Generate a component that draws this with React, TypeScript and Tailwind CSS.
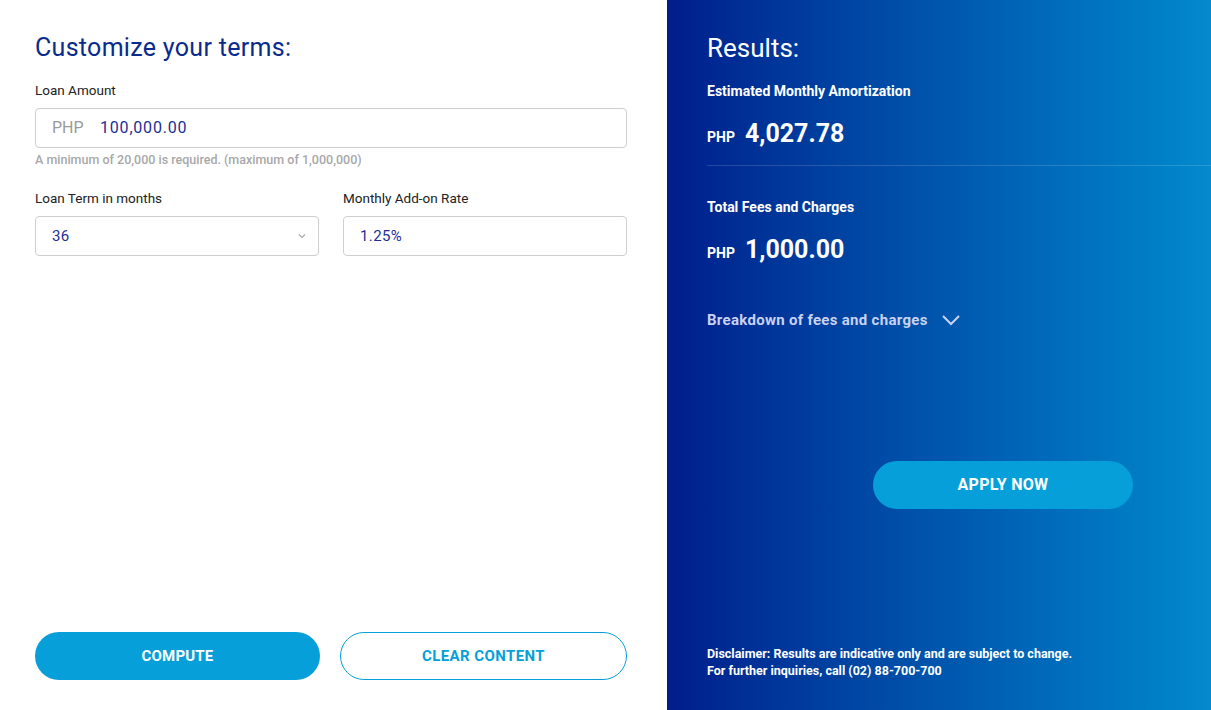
import React, { useState } from 'react';

const font = { fontFamily: 'Roboto, "Noto Sans", sans-serif' };

const App: React.FC = () => {
    const [amount, setAmount] = useState('100,000.00');
    const [term, setTerm] = useState('36');
    const [rate, setRate] = useState('1.25%');

    return (
        <div style={font} className="flex w-full h-[710px] overflow-hidden">
            {/* left: form */}
            <div className="w-[667px] shrink-0 bg-white flex flex-col px-[35px] pt-[31px] pb-[30px]">
                <h1 className="text-[25px] leading-[34px] font-normal text-[#0b2a8e] tracking-[0.3px]">Customize your terms:</h1>
                <label htmlFor="amount" className="mt-[16px] text-[13.5px] leading-[18px] font-normal text-[#222]">Loan Amount</label>
                <div className="mt-[9px] h-[40px] w-[592px] flex items-center border border-[#cfcfcf] rounded-[4px] px-[16px]">
                    <span className="text-[16px] text-[#9a9a9a] w-[48px]">PHP</span>
                    <input
                        id="amount"
                        value={amount}
                        onChange={(e) => setAmount(e.target.value)}
                        className="flex-1 text-[16px] tracking-[0.8px] text-[#1c2f96] outline-none bg-transparent"
                    />
                </div>
                <p className="mt-[4px] text-[12.5px] leading-[16px] font-medium text-[#a8a8a8]">A minimum of 20,000 is required. (maximum of 1,000,000)</p>

                <div className="mt-[21px] flex gap-[24px] w-[592px]">
                    <div className="flex-1 flex flex-col">
                        <label htmlFor="term" className="text-[13.5px] leading-[18px] font-normal text-[#222]">Loan Term in months</label>
                        <div className="relative mt-[9px] h-[40px] border border-[#cfcfcf] rounded-[4px]">
                            <select
                                id="term"
                                value={term}
                                onChange={(e) => setTerm(e.target.value)}
                                className="appearance-none w-full h-full px-[16px] text-[15px] tracking-[0.4px] text-[#1c2f96] bg-transparent outline-none"
                            >
                                {['12', '18', '24', '36'].map((m) => (
                                    <option key={m} value={m}>{m}</option>
                                ))}
                            </select>
                            <svg className="absolute right-[12px] top-[16px] pointer-events-none" width="8" height="6" viewBox="0 0 8 6">
                                <path d="M1 1.5 L4 4.5 L7 1.5" fill="none" stroke="#aaa" strokeWidth="1.2" />
                            </svg>
                        </div>
                    </div>
                    <div className="flex-1 flex flex-col">
                        <label htmlFor="rate" className="text-[13.5px] leading-[18px] font-normal text-[#222]">Monthly Add-on Rate</label>
                        <input
                            id="rate"
                            value={rate}
                            onChange={(e) => setRate(e.target.value)}
                            className="mt-[9px] h-[40px] border border-[#cfcfcf] rounded-[4px] px-[16px] text-[15px] tracking-[0.4px] text-[#1c2f96] outline-none"
                        />
                    </div>
                </div>

                <div className="mt-auto flex gap-[20px] w-[592px]">
                    <button className="w-[285px] h-[48px] rounded-full bg-[#069fd9] text-white text-[15px] tracking-[0.2px] font-bold uppercase">Compute</button>
                    <button className="w-[287px] h-[48px] rounded-full border border-[#069fd9] text-[#069fd9] text-[15px] tracking-[0.4px] font-bold uppercase">Clear Content</button>
                </div>
            </div>

            {/* right: results */}
            <div className="flex-1 overflow-hidden bg-gradient-to-r from-[#021c8c] to-[#0689cd] text-white pl-[40px] pt-[31px] pb-[31px] flex flex-col">
                <div className="w-[592px] flex flex-col h-full">
                    <h2 className="text-[26px] leading-[34px] font-normal">Results:</h2>
                    <p className="mt-[17px] text-[14px] leading-[18px] font-bold">Estimated Monthly Amortization</p>
                    <div className="mt-[19px] flex items-baseline gap-[10px]">
                        <span className="text-[14px] font-bold">PHP</span>
                        <span className="text-[25px] leading-[30px] font-bold">4,027.78</span>
                    </div>
                    <div className="mt-[16px] h-px bg-white/15" />
                    <p className="mt-[32px] text-[14px] leading-[18px] font-bold">Total Fees and Charges</p>
                    <div className="mt-[19px] flex items-baseline gap-[10px]">
                        <span className="text-[14px] font-bold">PHP</span>
                        <span className="text-[25px] leading-[30px] font-bold">1,000.00</span>
                    </div>
                    <button className="mt-[44px] self-start flex items-center gap-[13px] text-[15px] tracking-[0.3px] font-bold text-[#c9d2f2]">
                        Breakdown of fees and charges
                        <svg width="20" height="12" viewBox="0 0 20 12">
                            <path d="M2 2 L10 10 L18 2" fill="none" stroke="#c9d2f2" strokeWidth="2" />
                        </svg>
                    </button>
                    <button className="mt-[129px] self-center w-[260px] h-[48px] rounded-full bg-[#069fd9] text-[16px] tracking-[0.3px] font-bold uppercase">Apply Now</button>
                    <div className="mt-auto text-[12.5px] leading-[17px] font-bold">
                        <p>Disclaimer: Results are indicative only and are subject to change.</p>
                        <p>For further inquiries, call (02) 88-700-700</p>
                    </div>
                </div>
            </div>
        </div>
    );
};

export default App;
